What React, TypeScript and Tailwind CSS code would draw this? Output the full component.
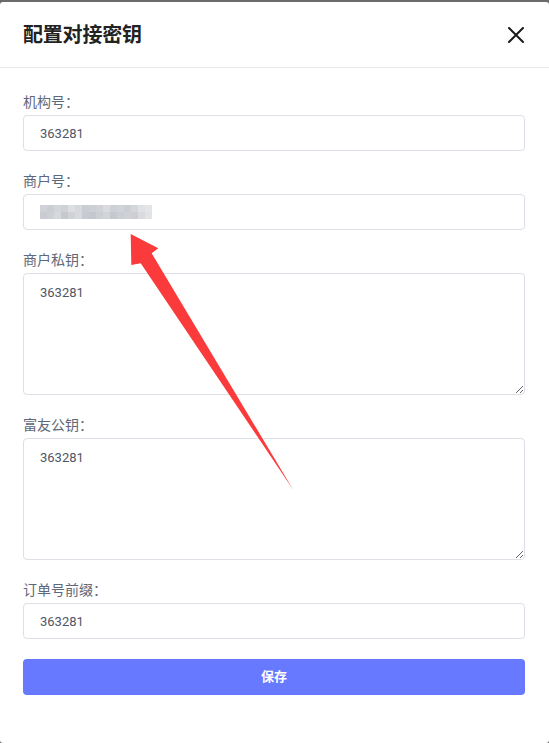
const mosaicTop = ["#cfd2d7", "#cbced3", "#d3d5da", "#ced1d6", "#dcdee1", "#d6d8dc", "#c9ccd1", "#cccfd4", "#d0d2d7", "#d9dbdf", "#cdd0d5", "#d1d3d8", "#cbced3", "#d4d6da", "#dfe1e4", "#e4e5e8"];
const mosaicBottom = ["#c9ccd1", "#cdd0d5", "#d6d8dc", "#c5c8ce", "#d0d2d7", "#d7d9dd", "#c7cad0", "#c4c7cd", "#cccfd4", "#d2d4d9", "#c5c8ce", "#cbced3", "#cfd1d6", "#ccced3", "#d9dbdf", "#e2e3e6"];

const Field = ({ label, children }: { label: string; children: React.ReactNode }) => (
  <div className="mb-5">
    <div className="h-5 leading-5 mb-[3px] text-[14px] text-[#606779]">{label}</div>
    {children}
  </div>
);

const TextInput = ({ value }: { value: string }) => (
  <input
    readOnly
    value={value}
    className="block w-full h-9 rounded border border-[#dcdfe6] bg-white pl-4 pr-3 text-[13px] text-[#4f5667] outline-none"
  />
);

const TextArea = ({ value }: { value: string }) => (
  <textarea
    readOnly
    value={value}
    className="block w-full h-[122px] rounded border border-[#dcdfe6] bg-white pl-4 pr-3 pt-[9px] leading-5 text-[13px] text-[#4f5667] outline-none"
  />
);

export default function App() {
  return (
    <div
      className="relative min-h-[743px] w-[549px] bg-[#6b6b6b] pt-[2px]"
      style={{ fontFamily: "Roboto, 'Noto Sans CJK SC', sans-serif" }}
    >
      <div className="h-[741px] rounded-[3px] bg-white">
        <div className="flex h-[66px] items-center justify-between border-b border-[#e8eaee] pl-[23px] pr-[25px]">
          <h1 className="text-[20px] font-bold text-[#222] tracking-[-0.2px]">配置对接密钥</h1>
          <button aria-label="关闭" className="text-[#1a1a1a]">
            <svg width="16" height="16" viewBox="0 0 16 16" fill="none" stroke="currentColor" strokeWidth="2" strokeLinecap="round">
              <path d="M1 1L15 15M15 1L1 15" />
            </svg>
          </button>
        </div>

        <div className="pl-[23px] pr-[24px] pt-6">
          <Field label="机构号：">
            <TextInput value="363281" />
          </Field>
          <Field label="商户号：">
            <div className="flex h-9 items-center rounded border border-[#dcdfe6] bg-white pl-4">
              <div className="flex flex-col">
                <div className="flex">
                  {mosaicTop.map((c, i) => (
                    <span key={i} className="h-[7px] w-[7px]" style={{ background: c }} />
                  ))}
                </div>
                <div className="flex">
                  {mosaicBottom.map((c, i) => (
                    <span key={i} className="h-[7px] w-[7px]" style={{ background: c }} />
                  ))}
                </div>
              </div>
            </div>
          </Field>
          <Field label="商户私钥：">
            <TextArea value="363281" />
          </Field>
          <Field label="富友公钥：">
            <TextArea value="363281" />
          </Field>
          <Field label="订单号前缀：">
            <TextInput value="363281" />
          </Field>
          <button className="h-9 w-full rounded bg-[#6679ff] text-[13px] font-bold text-white">保存</button>
        </div>
      </div>

      <svg className="pointer-events-none absolute left-0 top-0" width="549" height="743">
        <polygon
          points="130.7,234 158.3,248.3 151.7,253.3 293.3,490 140.7,263.3 131.3,265"
          fill="#fb3b3b"
        />
      </svg>
    </div>
  );
}
